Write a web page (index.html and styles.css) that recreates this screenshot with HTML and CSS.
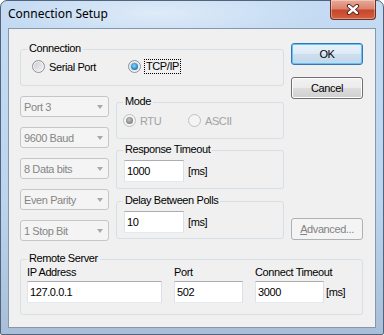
FILE: index.html
```html
<!DOCTYPE html>
<html lang="en">
<head>
  <meta charset="UTF-8" />
  <title>Connection Setup</title>
  <link rel="stylesheet" href="styles.css">
</head>
<body>

  <div class="window">
    <div class="titlebar">
      <span class="title">Connection Setup</span>
      <div class="close">
        <svg width="16" height="11" viewBox="0 0 16 11">
          <path d="M4 2 L12 9 M12 2 L4 9" stroke="#4a1a12" stroke-width="4.2" stroke-linecap="round"/>
          <path d="M4 2 L12 9 M12 2 L4 9" stroke="#fff" stroke-width="2.4" stroke-linecap="round"/>
        </svg>
      </div>
    </div>

    <div class="client">
      <div class="top">
        <div class="left">
          <!-- connection type -->
          <fieldset class="group conn">
            <legend>Connection</legend>
            <div class="radios">
              <label class="radio serial"><span class="dot"></span>Serial Port</label>
              <label class="radio on"><span class="dot"></span><span class="focus">TCP/IP</span></label>
            </div>
          </fieldset>

          <div class="settings">
            <div class="combos">
              <div class="combo">Port 3<span class="arrow"></span></div>
              <div class="combo">9600 Baud<span class="arrow"></span></div>
              <div class="combo">8 Data bits<span class="arrow"></span></div>
              <div class="combo">Even Parity<span class="arrow"></span></div>
              <div class="combo">1 Stop Bit<span class="arrow"></span></div>
            </div>

            <div class="groups">
              <fieldset class="group mode">
                <legend>Mode</legend>
                <div class="radios">
                  <label class="radio off on rtu"><span class="dot"></span>RTU</label>
                  <label class="radio off"><span class="dot"></span>ASCII</label>
                </div>
              </fieldset>
              <fieldset class="group timeout">
                <legend>Response Timeout</legend>
                <div class="field"><span class="edit">1000</span><span>[ms]</span></div>
              </fieldset>
              <fieldset class="group delay">
                <legend>Delay Between Polls</legend>
                <div class="field"><span class="edit">10</span><span>[ms]</span></div>
              </fieldset>
            </div>
          </div>
        </div>

        <div class="buttons">
          <button class="btn default">OK</button>
          <button class="btn cancel">Cancel</button>
          <button class="btn disabled"><u>A</u>dvanced...</button>
        </div>
      </div>

      <!-- remote server -->
      <fieldset class="group remote">
        <legend>Remote Server</legend>
        <div class="server">
          <span class="lbl">IP Address</span>
          <span class="lbl">Port</span>
          <span class="lbl">Connect Timeout</span>
          <span class="edit ip">127.0.0.1</span>
          <span class="edit port">502</span>
          <div class="field"><span class="edit port">3000</span><span>[ms]</span></div>
        </div>
      </fieldset>
    </div>
  </div>

</body>
</html>
```

FILE: styles.css
```css
body {
  margin: 0;
  font-family: "Liberation Sans", Arial, sans-serif;
  font-size: 11px;
  letter-spacing: -0.4px;
  color: #000;
}
.window {
  width: 384px;
  height: 335px;
  box-sizing: border-box;
  border: 1px solid #52647c;
  border-radius: 7px 7px 2px 2px;
  padding: 0 7px 6px;
  display: flex;
  flex-direction: column;
  background: linear-gradient(#c4dbf3, #bcd4ee 60%, #a9bfd8);
}
.titlebar {
  height: 27px;
  display: flex;
  align-items: flex-start;
  background: radial-gradient(ellipse 160px 30px at 150px 12px, rgba(255,255,255,0.45), rgba(255,255,255,0));
}
.title {
  font-family: "Noto Sans", sans-serif;
  font-size: 12px;
  letter-spacing: 0;
  line-height: 16px;
  padding-top: 5px;
}
.close {
  margin-left: auto;
  margin-top: -1px;
  width: 46px;
  height: 20px;
  box-sizing: border-box;
  border: 1px solid #6b2f25;
  border-top: 0;
  border-radius: 0 0 4px 4px;
  background: linear-gradient(#e9aa98, #d98470 45%, #c8472c 55%, #d2603f);
  box-shadow: inset 0 0 0 1px rgba(255,255,255,0.35);
  display: flex;
  align-items: center;
  justify-content: center;
}
.client {
  flex: 1;
  background: #f0f0f0;
  border: 1px solid #8597ad;
  padding: 14px 12px 0 11px;
}
.top {
  display: grid;
  grid-template-columns: 264px 72px;
  column-gap: 7px;
}

/* group boxes */
.group {
  margin: 0;
  min-width: 0;
  box-sizing: border-box;
  border: 1px solid #d5dfe5;
  border-radius: 3px;
  padding: 0 0 0 6px;
}
.group legend {
  padding: 0 2px 2px;
  line-height: 11px;
}
.conn { height: 43px; }
.conn .radios { padding: 3px 0 0 5px; }
.mode { height: 43px; }
.mode .radios { padding: 4px 0 0 0; }
.timeout { height: 45px; margin-top: 5px; }
.delay { height: 44px; margin-top: 6px; }

/* radios */
.radios { display: flex; }
.radio {
  display: flex;
  align-items: center;
  height: 15px;
}
.serial { width: 96px; }
.rtu { width: 65px; }
.dot {
  width: 13px;
  height: 13px;
  box-sizing: border-box;
  border-radius: 50%;
  border: 1px solid #8f9194;
  background: linear-gradient(135deg, #c9ccd1, #f5f5f5);
  box-shadow: inset 0 0 0 1px #f4f4f4;
  margin-right: 4px;
  display: flex;
  align-items: center;
  justify-content: center;
}
.on .dot::after {
  content: "";
  width: 7px;
  height: 7px;
  border-radius: 50%;
  background: radial-gradient(circle at 45% 40%, #8fd8fb, #2a8fd0 55%, #0f4d85);
}
.off { color: #a2a2a2; }
.off .dot {
  border-color: #c0c0c0;
  background: #f4f4f4;
}
.off.on .dot::after {
  background: radial-gradient(circle at 45% 40%, #c8c8c8, #8a8a8a 60%, #707070);
}
.focus {
  outline: 1px dotted #000;
  padding: 0 1px;
  line-height: 13px;
}

/* left combos */
.settings {
  display: flex;
  gap: 7px;
  margin-top: 10px;
}
.combos {
  width: 89px;
  display: flex;
  flex-direction: column;
  gap: 10px;
}
.combo {
  height: 21px;
  box-sizing: border-box;
  border: 1px solid #c4c6c8;
  border-radius: 3px;
  background: #f4f4f4;
  color: #868686;
  padding-left: 3px;
  display: flex;
  align-items: center;
  justify-content: space-between;
}
.arrow {
  border-left: 3.5px solid transparent;
  border-right: 3.5px solid transparent;
  border-top: 4px solid #a9a9a9;
  margin-right: 5px;
}
.groups {
  width: 168px;
  display: flex;
  flex-direction: column;
}

/* edits */
.field {
  display: flex;
  align-items: center;
  gap: 4px;
  padding: 3px 0 0 1px;
}
.edit {
  display: block;
  width: 60px;
  height: 22px;
  box-sizing: border-box;
  background: #fff;
  border: 1px solid;
  border-color: #abadb3 #dbdfe6 #e3e9ef #e2e3ea;
  padding-left: 2px;
  line-height: 20px;
}

/* buttons */
.buttons {
  display: flex;
  flex-direction: column;
}
.btn {
  width: 72px;
  height: 22px;
  box-sizing: border-box;
  border: 1px solid #707070;
  border-radius: 3px;
  background: linear-gradient(#f2f2f2 0%, #ebebeb 49%, #dddddd 50%, #cfcfcf 100%);
  box-shadow: inset 0 0 0 1px #fcfcfc;
  font: inherit;
  letter-spacing: inherit;
  color: #000;
  padding: 0;
}
.default {
  border-color: #3377b8;
  background: linear-gradient(#eaf2fa, #dce9f5 50%, #cddeee 51%, #c3d7ea);
  box-shadow: inset 0 0 0 1px #62c4f0;
}
.cancel { margin-top: 12px; }
.disabled {
  margin-top: auto;
  margin-bottom: 1px;
  border-color: #adb2b5;
  background: #f4f4f4;
  box-shadow: none;
  color: #838383;
}

/* remote server */
.remote {
  margin-top: 12px;
  height: 62px;
}
.server {
  display: grid;
  grid-template-columns: 135px 69px auto;
  column-gap: 12px;
  row-gap: 2px;
}
.lbl { line-height: 13px; }
.ip { width: 135px; }
.port { width: 69px; }
.server .field { padding: 0; gap: 2px; }
```
